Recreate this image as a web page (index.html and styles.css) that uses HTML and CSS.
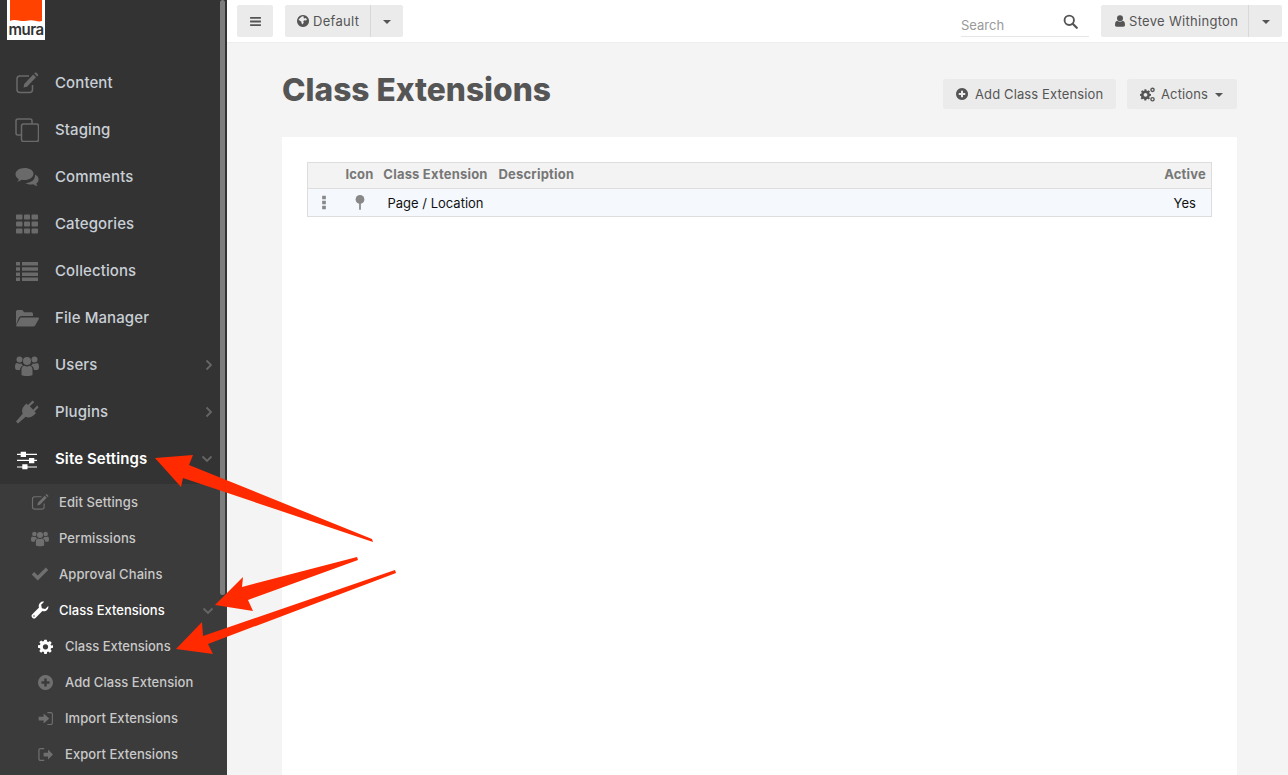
FILE: index.html
```html
<!DOCTYPE html>
<html lang="en">
<head>
<meta charset="utf-8">
<title>Class Extensions</title>
<link rel="stylesheet" href="styles.css">
</head>
<body>
<svg class="sprite" aria-hidden="true">
  <symbol id="i-edit" viewBox="0 0 24 24"><path d="M17.500 14v4.500a3 3 0 0 1-3 3H5a3 3 0 0 1-3-3V8a3 3 0 0 1 3-3h9" fill="none" stroke="currentColor" stroke-width="1.500"/><path d="M8.500 16.500l.7-3.500 9-9.500 2.800 2.800-9 9.500z M19.300 2.500l.9-.9c.3-.3.7-.3 1 0l1.900 1.900c.3.3.3.7 0 1l-1 .9z" fill="currentColor"/></symbol>
  <symbol id="i-clone" viewBox="0 0 24 24"><path d="M6 17H3a2 2 0 0 1-2-2V3a2 2 0 0 1 2-2h12a2 2 0 0 1 2 2v3" fill="none" stroke="currentColor" stroke-width="1.500"/><rect x="6.500" y="6" width="17" height="17.500" rx="2" fill="none" stroke="currentColor" stroke-width="1.500"/></symbol>
  <symbol id="i-comments" viewBox="0 0 24 24"><path d="M9.500 3C4.500 3 .5 5.800 .5 9.300c0 2 1.300 3.700 3.300 4.900-.3 1-.8 1.900-1.500 2.600 1.700-.3 3.200-1 4.400-2 .9.200 1.800.3 2.800.3 5 0 9-2.800 9-6.300S14.500 3 9.500 3z" fill="currentColor"/><path d="M20 9.500c2.200 1.100 3.600 2.900 3.600 4.900 0 1.600-.9 3-2.300 4.100.2 1 .7 1.900 1.300 2.600-1.600-.2-3-.9-4.200-1.800-.9.200-1.800.3-2.700.3-2.200 0-4.200-.6-5.700-1.500 5.500 0 10.500-3 10-8.600z" fill="currentColor"/></symbol>
  <symbol id="i-th" viewBox="0 0 24 24"><path d="M1 3.500a1 1 0 0 1 1-1h4.500a1 1 0 0 1 1 1v3a1 1 0 0 1-1 1H2a1 1 0 0 1-1-1z M9 3.500a1 1 0 0 1 1-1h4a1 1 0 0 1 1 1v3a1 1 0 0 1-1 1h-4a1 1 0 0 1-1-1z M16.500 3.500a1 1 0 0 1 1-1H22a1 1 0 0 1 1 1v3a1 1 0 0 1-1 1h-4.500a1 1 0 0 1-1-1z M1 10.500a1 1 0 0 1 1-1h4.500a1 1 0 0 1 1 1v3a1 1 0 0 1-1 1H2a1 1 0 0 1-1-1z M9 10.500a1 1 0 0 1 1-1h4a1 1 0 0 1 1 1v3a1 1 0 0 1-1 1h-4a1 1 0 0 1-1-1z M16.500 10.500a1 1 0 0 1 1-1H22a1 1 0 0 1 1 1v3a1 1 0 0 1-1 1h-4.500a1 1 0 0 1-1-1z M1 17.500a1 1 0 0 1 1-1h4.500a1 1 0 0 1 1 1v3a1 1 0 0 1-1 1H2a1 1 0 0 1-1-1z M9 17.500a1 1 0 0 1 1-1h4a1 1 0 0 1 1 1v3a1 1 0 0 1-1 1h-4a1 1 0 0 1-1-1z M16.500 17.500a1 1 0 0 1 1-1H22a1 1 0 0 1 1 1v3a1 1 0 0 1-1 1h-4.500a1 1 0 0 1-1-1z" fill="currentColor"/></symbol>
  <symbol id="i-list" viewBox="0 0 24 24"><path d="M1 3h4v3.500H1z M7 3h16v3.500H7z M1 8.200h4v3.500H1z M7 8.200h16v3.500H7z M1 13.400h4v3.500H1z M7 13.400h16v3.500H7z M1 18.600h4v3.500H1z M7 18.600h16v3.500H7z" fill="currentColor"/></symbol>
  <symbol id="i-folder" viewBox="0 0 24 24"><path d="M1 19V5.500A1.500 1.500 0 0 1 2.500 4h4.800l1.800 2.200h7.400A1.500 1.500 0 0 1 18 7.700V10H6.500a3 3 0 0 0-2.600 1.500z" fill="currentColor"/><path d="M5.500 11.500H23a1 1 0 0 1 .8 1.500l-3.500 6.300a2.500 2.500 0 0 1-2.100 1.200H2.200a1 1 0 0 1-.9-1.500z" fill="currentColor"/></symbol>
  <symbol id="i-users" viewBox="0 0 24 24"><circle cx="12" cy="8" r="4"/><circle cx="4.500" cy="6.500" r="3"/><circle cx="19.500" cy="6.500" r="3"/><path d="M6.500 22v-5.500c0-2.500 1.500-3.800 3-3.800 1.600 1 3.400 1 5 0 1.500 0 3 1.300 3 3.800V22c-1 .7-3 1-5.500 1s-4.500-.3-5.500-1z"/><path d="M0 14c0-2.500.8-4 2-4 1.300.9 3 .9 4.300.4.300 1 1 1.800 1.900 2.200C6 13.500 5 15 5 17H2c-1.200 0-2-1-2-3z M24 14c0-2.500-.8-4-2-4-1.300.9-3 .9-4.300.4-.3 1-1 1.800-1.900 2.200 2.200.9 3.200 2.400 3.200 4.400h3c1.200 0 2-1 2-3z"/></symbol>
  <symbol id="i-plug" viewBox="0 0 24 24"><path d="M23.500 7.500l-4 4 1.500 1.500-2 2c-2.500 2.500-5.700 3-8.300 1.700L3 23.500 1 21.500l6.700-7.700C6.500 11.200 7 8 9.500 5.500l2-2 1.500 1.500 4.500-4.500 1.800 1.800L14.800 6.300l3.400 3.400 4-4.500z" fill="currentColor"/></symbol>
  <symbol id="i-sliders" viewBox="0 0 24 24"><path d="M2 6.800h20v1.200H2z M2 12.800h20v1.200H2z M2 19.400h20v1.200H2z" fill="currentColor"/><path d="M5.700 4.700h5.300V10H5.700z M14 11h5.300v5.300H14z M7.300 17.300h5.200v5H7.300z" fill="currentColor"/></symbol>
  <symbol id="i-check" viewBox="0 0 24 24"><path d="M9 20.500L1 12.500l3.200-3.200L9 14.100 19.800 3.300 23 6.500z" fill="currentColor"/></symbol>
  <symbol id="i-wrench" viewBox="0 0 24 24"><path d="M23 6.500c.5 2 0 4-1.500 5.500-1.700 1.700-4.200 2.200-6.300 1.300L6.300 22.200a3 3 0 0 1-4.500-4.500l8.900-8.900C9.800 6.700 10.300 4.200 12 2.500 13.500 1 15.500.5 17.500 1l-4 4 1 4.500 4.500 1z M4 19a1 1 0 1 0 1 1 1 1 0 0 0-1-1z" fill="currentColor" fill-rule="evenodd"/></symbol>
  <symbol id="i-cog" viewBox="0 0 24 24"><path d="M10 1h4l.6 3.100 1.800.8 2.700-1.800 2.800 2.800-1.800 2.700.8 1.800L24 10v4l-3.100.6-.8 1.800 1.800 2.700-2.800 2.800-2.700-1.800-1.800.8L14 24h-4l-.6-3.100-1.800-.8-2.700 1.800-2.800-2.800 1.800-2.700-.8-1.800L0 14v-4l3.100-.6.8-1.800L2.100 5l2.800-2.800 2.700 1.800 1.800-.8z M12 8.200a4.300 4.300 0 1 0 .01 0z" fill="currentColor" fill-rule="evenodd"/></symbol>
  <symbol id="i-plus" viewBox="0 0 24 24"><path d="M12 0a12 12 0 1 0 .01 0z M10 5.500h4V10h4.500v4H14v4.500h-4V14H5.500v-4H10z" fill="currentColor" fill-rule="evenodd"/></symbol>
  <symbol id="i-signin" viewBox="0 0 24 24"><path d="M1 9h8V4l9 8-9 8v-5H1z" fill="currentColor"/><path d="M15 2.500h5.500A2.500 2.500 0 0 1 23 5v14a2.500 2.500 0 0 1-2.500 2.500H15" fill="none" stroke="currentColor" stroke-width="1.800"/></symbol>
  <symbol id="i-signout" viewBox="0 0 24 24"><path d="M9 9h7V4l8 8-8 8v-5H9z" fill="currentColor"/><path d="M10 2.500H4A2.500 2.500 0 0 0 1.500 5v14A2.500 2.500 0 0 0 4 21.500h6" fill="none" stroke="currentColor" stroke-width="2"/></symbol>
  <symbol id="i-globe" viewBox="0 0 24 24"><path d="M12 0a12 12 0 1 0 .01 0z M8 4l3-1.500 3 1-1 2.500 2 1 2.500-1 2.500 3-2 2-3-.5-2.500 2 1 3-3 3.500-1.500-3-.5-3-3-1.500-2.500-3L6 6.500z" fill="currentColor" fill-rule="evenodd"/></symbol>
  <symbol id="i-search" viewBox="0 0 24 24"><circle cx="10" cy="10" r="7.500" fill="none" stroke="currentColor" stroke-width="3"/><path d="M15.500 15.500l6.500 6.500" stroke="currentColor" stroke-width="3.600" stroke-linecap="round"/></symbol>
  <symbol id="i-user" viewBox="0 0 24 24"><circle cx="12" cy="6.500" r="6"/><path d="M2 20c0-5 1.500-8 4.500-8.500 3.300 2.700 7.700 2.700 11 0 3 .5 4.500 3.500 4.500 8.500 0 2-1.300 3.500-3.300 3.500H5.300C3.300 23.500 2 22 2 20z"/></symbol>
  <symbol id="i-cogs" viewBox="0 0 24 24"><path d="M7 3.500h3l.4 2.100 1.700.7 1.800-1.200 2.100 2.100-1.200 1.800.7 1.700 2.100.4v3l-2.100.4-.7 1.700 1.200 1.800-2.100 2.100-1.800-1.200-1.700.7-.4 2.100H7l-.4-2.100-1.700-.7-1.800 1.200-2.100-2.100 1.200-1.800-.7-1.700L0 14.100v-3l2.100-.4.7-1.700-1.200-1.800 2.100-2.100 1.800 1.200 1.700-.7z M8.800 9.600a3 3 0 1 0 .01 0z" fill="currentColor" fill-rule="evenodd"/><circle cx="20" cy="4.500" r="2.600" fill="none" stroke="currentColor" stroke-width="2.200"/><circle cx="20" cy="19.500" r="2.600" fill="none" stroke="currentColor" stroke-width="2.200"/></symbol>
  <symbol id="i-pin" viewBox="0 0 14 24"><circle cx="7" cy="7" r="7"/><path d="M5.600 12h2.800v11.500H5.600z"/></symbol>
  <symbol id="i-dots" viewBox="0 0 6 18"><path d="M.8 1h4.400v4.200H.8z M.8 7h4.400v4.200H.8z M.8 13h4.400v4.200H.8z"/></symbol>
  <symbol id="i-bars" viewBox="0 0 12 10"><path d="M0 0h12v2H0z M0 4h12v2H0z M0 8h12v2H0z" fill="currentColor"/></symbol>
  <symbol id="i-right" viewBox="0 0 8 12"><path d="M1.500 1.500L6 6l-4.500 4.500" fill="none" stroke="currentColor" stroke-width="1.800"/></symbol>
  <symbol id="i-down" viewBox="0 0 12 8"><path d="M1.500 1.500L6 6l4.500-4.500" fill="none" stroke="currentColor" stroke-width="1.800"/></symbol>
</svg>

<div class="app">
  <aside class="sidebar">
    <div class="logo-row">
      <div class="logo">
        <svg class="logo-flag" viewBox="0 0 32 22"><path d="M0 0h32v21c-4 1.200-7-.8-11-.8S14 21.500 10 20.800 3 19.500 0 21z" fill="#ff4200"/></svg>
        <span class="logo-text">mura</span>
      </div>
    </div>
    <ul class="nav">
      <li class="nav-item"><svg class="nav-icon"><use href="#i-edit"/></svg><span>Content</span></li>
      <li class="nav-item"><svg class="nav-icon"><use href="#i-clone"/></svg><span>Staging</span></li>
      <li class="nav-item"><svg class="nav-icon"><use href="#i-comments"/></svg><span>Comments</span></li>
      <li class="nav-item"><svg class="nav-icon"><use href="#i-th"/></svg><span>Categories</span></li>
      <li class="nav-item"><svg class="nav-icon"><use href="#i-list"/></svg><span>Collections</span></li>
      <li class="nav-item"><svg class="nav-icon"><use href="#i-folder"/></svg><span>File Manager</span></li>
      <li class="nav-item"><svg class="nav-icon"><use href="#i-users"/></svg><span>Users</span><svg class="chev-right"><use href="#i-right"/></svg></li>
      <li class="nav-item"><svg class="nav-icon"><use href="#i-plug"/></svg><span>Plugins</span><svg class="chev-right"><use href="#i-right"/></svg></li>
      <li class="nav-item is-open"><svg class="nav-icon"><use href="#i-sliders"/></svg><span>Site Settings</span><svg class="chev-down"><use href="#i-down"/></svg></li>
    </ul>
    <ul class="subnav">
      <li class="sub-item"><svg class="sub-icon"><use href="#i-edit"/></svg><span>Edit Settings</span></li>
      <li class="sub-item"><svg class="sub-icon"><use href="#i-users"/></svg><span>Permissions</span></li>
      <li class="sub-item"><svg class="sub-icon"><use href="#i-check"/></svg><span>Approval Chains</span></li>
      <li class="sub-item is-open"><svg class="sub-icon"><use href="#i-wrench"/></svg><span>Class Extensions</span><svg class="chev-down"><use href="#i-down"/></svg></li>
      <li class="sub-item level-3 is-current"><svg class="sub-icon"><use href="#i-cog"/></svg><span>Class Extensions</span></li>
      <li class="sub-item level-3"><svg class="sub-icon"><use href="#i-plus"/></svg><span>Add Class Extension</span></li>
      <li class="sub-item level-3"><svg class="sub-icon"><use href="#i-signin"/></svg><span>Import Extensions</span></li>
      <li class="sub-item level-3"><svg class="sub-icon"><use href="#i-signout"/></svg><span>Export Extensions</span></li>
    </ul>
    <div class="scroll-thumb"></div>
  </aside>

  <div class="workspace">
    <header class="topbar">
      <button class="btn btn-bars"><svg class="ico-bars"><use href="#i-bars"/></svg></button>
      <div class="split">
        <button class="btn split-main split-site"><svg class="ico-14"><use href="#i-globe"/></svg>Default</button>
        <button class="btn split-caret"><i class="caret"></i></button>
      </div>
      <div class="top-spacer"></div>
      <div class="search">
        <span class="search-text">Search</span>
        <svg class="ico-search"><use href="#i-search"/></svg>
      </div>
      <div class="split">
        <button class="btn split-main split-user"><svg class="ico-12"><use href="#i-user"/></svg>Steve Withington</button>
        <button class="btn split-caret"><i class="caret"></i></button>
      </div>
    </header>

    <main class="main">
      <div class="title-row">
        <h1 class="title">Class Extensions</h1>
        <div class="actions">
          <button class="btn btn-action btn-add"><svg class="ico-12"><use href="#i-plus"/></svg>Add Class Extension</button>
          <button class="btn btn-action btn-more"><svg class="ico-15"><use href="#i-cogs"/></svg>Actions<i class="caret caret-gap"></i></button>
        </div>
      </div>
      <section class="panel">
        <table class="table">
          <thead>
            <tr>
              <th class="col-handle"></th>
              <th class="col-icon">Icon</th>
              <th class="col-name">Class Extension</th>
              <th class="col-desc">Description</th>
              <th class="col-active">Active</th>
            </tr>
          </thead>
          <tbody>
            <tr>
              <td class="col-handle"><svg class="ico-dots"><use href="#i-dots"/></svg></td>
              <td class="col-icon"><svg class="ico-pin"><use href="#i-pin"/></svg></td>
              <td class="col-name">Page / Location</td>
              <td class="col-desc"></td>
              <td class="col-active">Yes</td>
            </tr>
          </tbody>
        </table>
      </section>
    </main>
  </div>
</div>

<svg class="arrows" viewBox="0 0 1288 775" aria-hidden="true">
  <polygon class="arrow" points="372,539 373,542 183,478 181,487 155,458 193,455 189,465"/>
  <polygon class="arrow" points="357,557 358,560 248,600 253,611 215,605 243,577 242,587"/>
  <polygon class="arrow" points="395,570 396,573 208,644 213,654 176,649 202,622 203,636"/>
</svg>
</body>
</html>
```
FILE: styles.css
```css
* { box-sizing: border-box; }
html, body { margin: 0; height: 100%; }
body {
  font-family: Inter, "Noto Sans", sans-serif;
  color: #555;
  overflow: hidden;
  position: relative;
}
ul { list-style: none; margin: 0; padding: 0; }
button { font: inherit; border: 0; padding: 0; }
.sprite { position: absolute; width: 0; height: 0; overflow: hidden; }
.sprite symbol { fill: currentColor; }

.app { display: flex; height: 775px; }

/* sidebar */
.sidebar {
  position: relative;
  flex: 0 0 227px;
  background: #333;
  overflow: hidden;
  color: #c9cfd6;
}
.logo-row { height: 59px; padding-left: 7px; }
.logo {
  position: relative;
  width: 38px;
  height: 40px;
  background: #fff;
  display: flex;
  flex-direction: column;
  align-items: center;
}
.logo-flag { display: block; width: 32px; height: 22px; flex: none; }
.logo-text {
  font-size: 15px;
  font-weight: 600;
  line-height: 14px;
  letter-spacing: -.5px;
  color: #333;
  margin-top: 1px;
}
.nav-item {
  display: flex;
  align-items: center;
  height: 47px;
  padding: 0 13px 0 15px;
  font-size: 15px;
  font-weight: 500;
  letter-spacing: .1px;
  position: relative;
}
.nav-icon { width: 24px; height: 24px; margin-right: 16px; color: #6a6a6a; flex: none; }
.chev-right { width: 8px; height: 12px; color: #666; position: absolute; left: 205px; top: 18px; }
.chev-down { width: 12px; height: 8px; color: #666; position: absolute; left: 201px; top: 20px; }
.is-open { color: #fff; font-weight: 600; }
.is-open .nav-icon, .is-open .sub-icon { color: #fff; }
.subnav { background: #3b3b3b; padding: 0; margin-top: 2px; height: 300px; }
.sub-item {
  display: flex;
  align-items: center;
  height: 36px;
  padding-left: 31px;
  font-size: 13px;
  font-weight: 500;
  letter-spacing: .1px;
  color: #c9c9c9;
  position: relative;
}
.sub-item.is-open { color: #fff; letter-spacing: 0; }
.sub-icon { width: 18px; height: 18px; margin-right: 10px; color: #6f6f6f; flex: none; }
.level-3 { padding-left: 38px; letter-spacing: .05px; }
.level-3 .sub-icon { width: 15px; height: 15px; margin-right: 12px; }
.is-current { letter-spacing: 0; }
.is-current .sub-icon { color: #fff; }
.sub-item .chev-down { top: 15px; left: 202px; }
.scroll-thumb {
  position: absolute;
  left: 220px;
  top: 0;
  width: 5px;
  height: 595px;
  border-radius: 3px;
  background: #7d7d7d;
}

/* top bar */
.workspace { flex: 1; display: flex; flex-direction: column; min-width: 0; }
.topbar {
  height: 43px;
  flex: none;
  background: #fff;
  border-bottom: 1px solid #eee;
  display: flex;
  align-items: flex-start;
  padding: 5px 6px 0 10px;
}
.btn {
  background: #ebebeb;
  color: #555;
  display: inline-flex;
  align-items: center;
  font-size: 13px;
  border-radius: 2px;
}
.btn-bars { width: 36px; height: 32px; justify-content: center; margin-right: 12px; }
.ico-bars { width: 11px; height: 9px; color: #555; }
.split { display: flex; height: 32px; }
.split-main { height: 32px; border-right: 1px solid #d8d8d8; border-radius: 2px 0 0 2px; }
.split-site { width: 86px; padding-left: 12px; letter-spacing: .3px; }
.split-user { width: 148px; padding-left: 13px; letter-spacing: .3px; }
.split-user .ico-12 { margin-right: 3px; }
.split-site + .split-caret { width: 32px; }
.split-caret { width: 33px; height: 32px; justify-content: center; border-radius: 0 2px 2px 0; }
.caret {
  display: inline-block;
  width: 0;
  height: 0;
  border-left: 4px solid transparent;
  border-right: 4px solid transparent;
  border-top: 4px solid #555;
  margin-top: 2px;
}
.ico-14 { width: 12px; height: 12px; margin-right: 4px; color: #555; }
.ico-12 { width: 12px; height: 12px; margin-right: 4px; color: #555; fill: #555; }
.ico-15 { width: 15px; height: 15px; margin-right: 6px; color: #555; }
.top-spacer { flex: 1; }
.search {
  width: 128px;
  height: 32px;
  border-bottom: 1px solid #e6e6e6;
  display: flex;
  align-items: center;
  justify-content: space-between;
  margin-right: 12px;
  padding: 8px 11px 0 0;
}
.search-text { font-size: 13px; color: #999; }
.ico-search { width: 15px; height: 15px; color: #555; margin-top: -6px; }

/* main */
.main { flex: 1; background: #f4f4f4; padding: 0 51px 0 55px; display: flex; flex-direction: column; min-height: 0; }
.title-row { height: 94px; display: flex; justify-content: space-between; flex: none; }
.title { margin: 28px 0 0; font-size: 31.7px; line-height: 38px; font-weight: 800; color: #555; letter-spacing: 0; }
.actions { display: flex; gap: 11px; padding-top: 36px; }
.btn-action { height: 30px; letter-spacing: .12px; }
.btn-add { width: 173px; padding-left: 13px; }
.btn-add .ico-12 { margin-right: 7px; }
.btn-more { width: 110px; padding-left: 13px; }
.caret-gap { margin-left: 7px; }
.panel { flex: 1; background: #fff; padding: 25px; }
.table { width: 100%; border-collapse: collapse; table-layout: fixed; font-size: 13px; }
.table th, .table td { border-top: 1px solid #ddd; border-bottom: 1px solid #ddd; padding: 0; text-align: center; }
.table tr > :first-child { border-left: 1px solid #ddd; }
.table tr > :last-child { border-right: 1px solid #ddd; }
.table th { height: 26px; background: #f3f3f3; color: #777; font-weight: 700; letter-spacing: .2px; padding-bottom: 4px; }
.table td { height: 28px; background: #f5f9fe; color: #111; }
.table .col-handle { width: 33px; }
.table .col-icon { width: 38px; }
.table .col-name { width: 114px; }
.table .col-desc { text-align: left; padding-left: 6px; }
.table .col-active { width: 53px; }
.table th.col-active { text-align: right; padding-right: 5px; }
.ico-dots { width: 6px; height: 15px; color: #888; fill: #888; display: block; margin: 0 auto 0 13px; }
.ico-pin { width: 10px; height: 15px; color: #888; fill: #888; display: block; margin: 0 auto; }

/* annotation arrows */
.arrows { position: absolute; left: 0; top: 0; width: 1288px; height: 775px; pointer-events: none; }
.arrow { fill: #ff2a00; }
```
